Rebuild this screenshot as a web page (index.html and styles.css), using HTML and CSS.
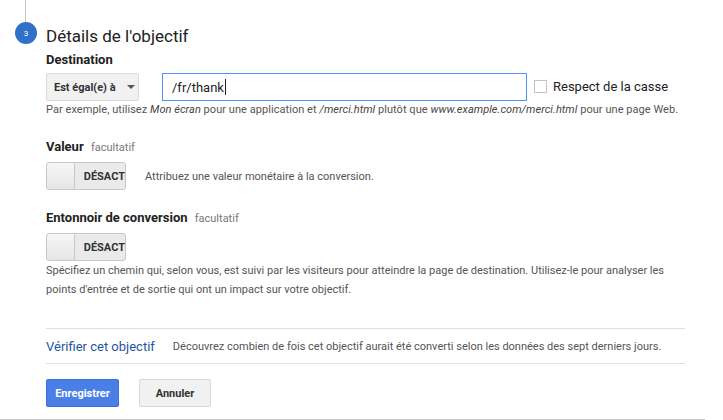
FILE: index.html
```html
<!DOCTYPE html>
<html lang="fr">
<head>
<meta charset="utf-8">
<link rel="stylesheet" href="styles.css">
</head>
<body>
<div class="page">
  <div class="rail"></div>
  <div class="step-head">
    <span class="step-num">3</span>
    <h2 class="step-title">Détails de l'objectif</h2>
  </div>

  <div class="content">
    <div class="label label-dest">Destination</div>
    <div class="dest-row">
      <div class="select">Est égal(e) à <span class="caret"></span></div>
      <div class="input">/fr/thank<span class="cursor"></span></div>
      <label class="check"><span class="box"></span>Respect de la casse</label>
    </div>
    <p class="hint">Par exemple, utilisez <i>Mon écran</i> pour une application et <i>/merci.html</i> plutôt que <i>www.example.com/merci.html</i> pour une page Web.</p>

    <div class="label label-val">Valeur <span class="opt">facultatif</span></div>
    <div class="toggle-row">
      <div class="toggle"><span class="knob"></span><span class="toggle-text">DÉSACT</span></div>
      <span class="toggle-desc">Attribuez une valeur monétaire à la conversion.</span>
    </div>

    <div class="label label-fun">Entonnoir de conversion <span class="opt">facultatif</span></div>
    <div class="toggle-row">
      <div class="toggle"><span class="knob"></span><span class="toggle-text">DÉSACT</span></div>
    </div>
    <p class="para">Spécifiez un chemin qui, selon vous, est suivi par les visiteurs pour atteindre la page de destination. Utilisez-le pour analyser les points d'entrée et de sortie qui ont un impact sur votre objectif.</p>

    <div class="verify">
      <a class="verify-link">Vérifier cet objectif</a>
      <span class="verify-desc">Découvrez combien de fois cet objectif aurait été converti selon les données des sept derniers jours.</span>
    </div>

    <div class="actions">
      <button class="btn btn-primary">Enregistrer</button>
      <button class="btn btn-default">Annuler</button>
    </div>
  </div>
  <div class="bottom-line"></div>
</div>
</body>
</html>
```
FILE: styles.css
```css
* { box-sizing: border-box; }
html, body { margin: 0; padding: 0; background: #fff; }
body {
  font-family: Roboto, "Liberation Sans", Arial, sans-serif;
  color: #222;
  width: 723px;
  height: 420px;
  overflow: hidden;
}
.rail {
  width: 1px;
  height: 22px;
  margin-left: 25px;
  background: #c8c8c8;
}
.step-head {
  display: flex;
  align-items: center;
  height: 22px;
  padding-left: 15px;
  gap: 9px;
}
.step-num {
  width: 22px;
  height: 22px;
  border-radius: 50%;
  background: #2f70c9;
  color: #fff;
  font-size: 8px;
  display: flex;
  align-items: center;
  justify-content: center;
}
.step-title {
  margin: 0;
  font-size: 17px;
  font-weight: 400;
  color: #222;
  line-height: 22px;
  position: relative;
  top: 3px;
}
.content { padding-left: 46px; width: 685px; }
.label {
  font-size: 13px;
  font-weight: 700;
  color: #222;
  line-height: 16px;
}
.label-dest { margin-top: 8px; }
.opt { font-size: 11px; font-weight: 400; color: #777; margin-left: 4px; }
.dest-row {
  display: flex;
  align-items: center;
  margin-top: 5px;
  height: 28px;
}
.select {
  width: 93px;
  height: 28px;
  background: #f1f1f1;
  border: 1px solid #dcdcdc;
  border-radius: 2px;
  font-size: 11px;
  font-weight: 700;
  color: #333;
  display: flex;
  align-items: center;
  padding-left: 7px;
}
.caret {
  width: 0; height: 0;
  border-left: 4px solid transparent;
  border-right: 4px solid transparent;
  border-top: 4px solid #555;
  margin-left: 11px;
}
.input {
  margin-left: 23px;
  width: 365px;
  height: 28px;
  border: 1px solid #4d90fe;
  font-size: 13px;
  color: #222;
  display: flex;
  align-items: center;
  padding-left: 9px;
}
.cursor { width: 1px; height: 16px; background: #222; margin-left: 1px; }
.check {
  display: flex;
  align-items: center;
  margin-left: 7px;
  font-size: 13px;
  color: #222;
  position: relative;
  top: -1px;
}
.box {
  width: 13px; height: 13px;
  border: 1px solid #c4c4c4;
  background: #fff;
  margin-right: 6px;
}
.hint {
  margin: 1px 0 0;
  font-size: 11px;
  color: #555;
  line-height: 16px;
  white-space: nowrap;
  letter-spacing: 0.05px;
}
.hint i { color: #444; }
.label-val { margin-top: 21px; }
.toggle-row {
  display: flex;
  align-items: center;
  margin-top: 6px;
  height: 28px;
}
.toggle {
  width: 80px;
  height: 28px;
  border: 1px solid #c8c8c8;
  border-radius: 3px;
  background: #eaeaea;
  display: flex;
  align-items: center;
  overflow: hidden;
}
.knob {
  width: 31px;
  height: 26px;
  background: linear-gradient(#f6f6f6, #e6e6e6);
  border-right: 1px solid #c8c8c8;
  border-radius: 2px;
  box-shadow: 0 1px 1px rgba(0,0,0,0.08);
}
.toggle-text {
  font-size: 11px;
  font-weight: 700;
  color: #333;
  margin-left: 9px;
  white-space: nowrap;
}
.toggle-desc { margin-left: 19px; font-size: 11px; color: #555; }
.label-fun { margin-top: 20px; }
.para {
  margin: 0;
  font-size: 11px;
  line-height: 19px;
  color: #555;
  width: 640px;
}
.verify {
  margin-top: 29px;
  border-top: 1px solid #e0e0e0;
  border-bottom: 1px solid #e0e0e0;
  height: 36px;
  display: flex;
  align-items: center;
  width: 639px;
}
.verify-link { font-size: 13px; color: #1f569f; }
.verify-desc { font-size: 11px; color: #555; margin-left: 18px; }
.actions {
  display: flex;
  gap: 20px;
  margin-top: 15px;
}
.btn {
  height: 28px;
  font-family: Roboto, "Liberation Sans", Arial, sans-serif;
  font-size: 11px;
  font-weight: 700;
  border-radius: 2px;
  padding: 0;
}
.btn-primary {
  width: 73px;
  background: #4a7fe8;
  border: 1px solid #3c6fd6;
  color: #fff;
}
.btn-default {
  width: 72px;
  background: #f1f1f1;
  border: 1px solid #d8d8d8;
  color: #333;
}
.bottom-line {
  margin-top: 12px;
  width: 705px;
  height: 2px;
  background: #c8c8c8;
}
```
